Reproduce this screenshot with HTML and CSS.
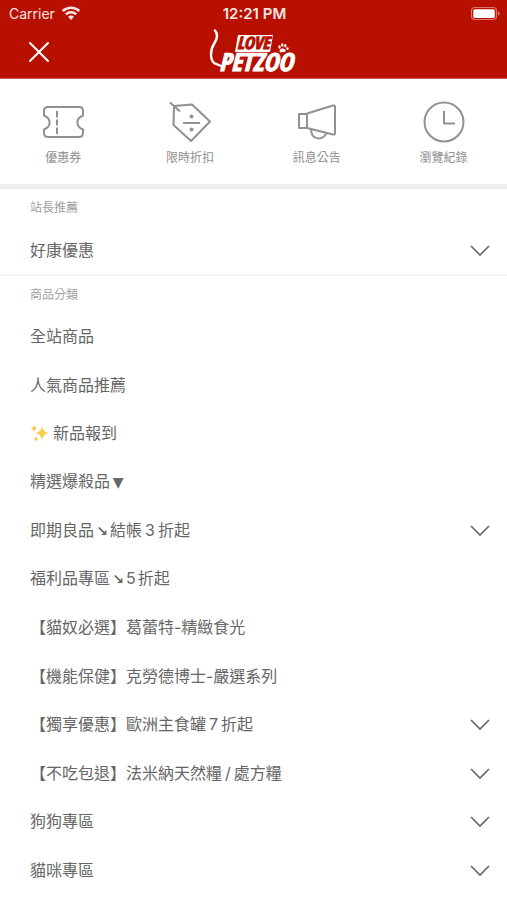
FILE: index.html
```html
<!DOCTYPE html>
<html lang="zh-Hant">
<head>
<meta charset="utf-8">
<meta name="viewport" content="width=device-width, initial-scale=1">
<title>LOVE PETZOO</title>
<link rel="stylesheet" href="styles.css">
</head>
<body>
<svg class="defs" aria-hidden="true">
  <symbol id="chevron" viewBox="0 0 22 14"><path d="M2 3l9 9 9-9" fill="none" stroke="currentColor" stroke-width="1.6"/></symbol>
</svg>
<header class="top">
  <div class="status">
    <div class="carrier"><span>Carrier</span>
      <svg width="20" height="16" viewBox="0 0 20 16" fill="none" stroke="currentColor" stroke-width="2.5"><path d="M1.7 5a12 12 0 0 1 16.600 0M4.800 8.300a7.500 7.500 0 0 1 10.400 0"/><path d="M10 14l-3-3.200a4.400 4.400 0 0 1 6 0z" fill="currentColor" stroke="none"/></svg>
    </div>
    <time>12:21 PM</time>
    <svg class="battery" width="30" height="16" viewBox="0 0 30 16"><rect x="1.500" y="1.500" width="25" height="12" rx="3.500" fill="none" stroke="#dd7770" stroke-width="1.200"/><rect x="3.300" y="3.200" width="21.500" height="8.800" rx="1.500" fill="#fff"/><path d="M28 5.300c2.200 1 2.200 3.400 0 4.400z" fill="#dd7770"/></svg>
  </div>
  <div class="brandbar">
    <button class="close" type="button" aria-label="關閉"><svg width="20" height="20" viewBox="0 0 20 20"><path d="M1 1l18 18M19 1L1 19" stroke="currentColor" stroke-width="2" stroke-linecap="round"/></svg></button>
    <a class="logo" href="#" aria-label="LOVE PETZOO">
      <svg width="92" height="46" viewBox="0 0 92 46">
        <path d="M7 1.500C10 5 10 9 6 15C2 21 2 30 6 34L13 37" fill="none" stroke="#fff" stroke-width="2.400" stroke-linecap="round"/>
        <path d="M30 6h35l-3 17H27z" fill="#fff"/>
        <text class="logo-love" x="29" y="20">LOVE</text>
        <text class="logo-pet" x="11" y="42">PETZOO</text>
        <g fill="#fff"><path d="M71.500 22.500c0-2.500 2-3.500 3.500-3s3.500 1.500 2.500 2.700-2 .8-2.800.8-2 1.500-3.200-.5z"/><ellipse cx="71.500" cy="18" rx="1.200" ry="1.700"/><ellipse cx="74.300" cy="16" rx="1.200" ry="1.700"/><ellipse cx="77.300" cy="16.700" rx="1.200" ry="1.700"/><ellipse cx="79.500" cy="19.500" rx="1.100" ry="1.500"/></g>
      </svg>
    </a>
  </div>
</header>
<nav class="shortcuts">
  <a href="#"><svg width="44" height="44" viewBox="0 0 44 44"><path d="M7 7h31q4 0 4 4v4.500c-7.500 3-7.500 11 0 14V33q0 4-4 4H7q-4 0-4-4v-3.500c7.500-3 7.500-11 0-14V11q0-4 4-4z"/><path d="M16 11v6.500m0 2v6m0 2v6.500"/></svg><span>優惠券</span></a>
  <a href="#"><svg width="44" height="44" viewBox="0 0 44 44"><path d="M6 6l18-1.500L42 21.500 23 41 5.500 25z"/><path d="M2 2.500l10 9M15 23h17"/><path d="M23.500 16.500v.01M23.500 29.500v.01" stroke-width="4" stroke-linecap="round"/></svg><span>限時折扣</span></a>
  <a href="#"><svg width="44" height="44" viewBox="0 0 44 44"><path d="M4 14h8v14H4zM12 13.500L38 5.500q2-.5 2 1.500v26q0 2-2 1.500L12 28M16 29c0 12 13 11.500 15 4.500"/></svg><span>訊息公告</span></a>
  <a href="#"><svg width="44" height="44" viewBox="0 0 44 44"><circle cx="22" cy="22" r="19.500"/><path d="M22 11v12.500h11"/></svg><span>瀏覽紀錄</span></a>
</nav>
<section class="featured">
  <h2>站長推薦</h2>
  <button class="row" type="button"><span>好康優惠</span><svg class="chevron"><use href="#chevron"/></svg></button>
</section>
<section class="categories">
  <h2>商品分類</h2>
  <nav class="list">
    <a class="row" href="#">全站商品</a>
    <a class="row" href="#">人氣商品推薦</a>
    <a class="row" href="#"><svg class="sparkle" width="20" height="18" viewBox="0 0 20 18" role="img" aria-label="✨"><path fill="#f8ce52" d="M12 2q1 6 7 7-6 1-7 7-1-6-7-7 6-1 7-7zM4 1q.5 3 3 3.500Q4.500 5 4 8 3.500 5 1 4.500 3.500 4 4 1zM6 12q.5 2.500 2.500 3Q6.500 15.500 6 18 5.500 15.500 3.500 15 5.500 14.500 6 12z"/></svg><span>新品報到</span></a>
    <a class="row" href="#"><span>精選爆殺品<span class="mark">▼</span></span></a>
    <button class="row" type="button"><span>即期良品<span class="mark arrow">↘</span>結帳<span class="num">3</span>折起</span><svg class="chevron"><use href="#chevron"/></svg></button>
    <a class="row" href="#"><span>福利品專區<span class="mark arrow">↘</span>5<span class="after-num">折起</span></span></a>
    <a class="row" href="#">【貓奴必選】葛蕾特-精緻食光</a>
    <a class="row" href="#">【機能保健】克勞德博士-嚴選系列</a>
    <button class="row" type="button"><span>【獨享優惠】歐洲主食罐<span class="num">7</span>折起</span><svg class="chevron"><use href="#chevron"/></svg></button>
    <button class="row" type="button"><span>【不吃包退】法米納天然糧<span class="num">/</span>處方糧</span><svg class="chevron"><use href="#chevron"/></svg></button>
    <button class="row" type="button"><span>狗狗專區</span><svg class="chevron"><use href="#chevron"/></svg></button>
    <button class="row" type="button"><span>貓咪專區</span><svg class="chevron"><use href="#chevron"/></svg></button>
  </nav>
</section>
</body>
</html>
```
FILE: styles.css
```css
* { box-sizing: border-box; }
body {
  margin: 0;
  min-height: 100vh;
  display: flex;
  flex-direction: column;
  background: #fff;
  color: #666;
  font: 16px/24px Inter, "Noto Sans CJK TC", sans-serif;
}
a { color: inherit; text-decoration: none; }
button { border: 0; padding: 0; background: none; color: inherit; font: inherit; text-align: left; }
.defs { position: absolute; width: 0; height: 0; }
.top { background: #b71000; color: #fff; border-bottom: 1px solid #cf5a50; }
.status, .brandbar { display: grid; grid-template-columns: 1fr auto 1fr; align-items: center; }
.status { height: 27px; padding: 0 7px 0 9px; font-size: 15px; color: #f8e4e2; }
.status time { font-weight: 600; }
.carrier { display: flex; align-items: center; gap: 6px; font-size: 14px; }
.battery { justify-self: end; }
.brandbar { height: 51px; padding: 0 29px 2px; }
.close, .logo { display: flex; }
.close { justify-self: start; }
.logo-love, .logo-pet { font-family: "Open Sans Condensed", "Roboto Condensed", Roboto, sans-serif; font-weight: 900; font-style: italic; }
.logo-love { fill: #b71000; stroke: #b71000; font-size: 17px; }
.logo-pet { fill: #fff; stroke: #fff; font-size: 25px; }
.shortcuts { display: grid; grid-template-columns: repeat(4, 1fr); height: 110px; padding-top: 21px; border-bottom: 5px solid #eee; color: #8e8e8e; font-size: 12px; line-height: 20px; }
.shortcuts a { display: flex; flex-direction: column; align-items: center; gap: 4px; }
.shortcuts svg { fill: none; stroke: #919191; stroke-width: 2; stroke-linejoin: round; }
h2 { margin: 0; padding: 9px 30px 7px; font-size: 12px; font-weight: 400; line-height: 20px; color: #a0a0a0; }
.featured { border-bottom: 2px solid #f5f5f5; }
.featured .row { min-height: 49px; }
.categories { flex: 1; display: flex; flex-direction: column; }
.list { flex: 1; display: grid; grid-auto-rows: minmax(48px, 1fr); padding-bottom: 6px; }
.row { display: flex; align-items: center; width: 100%; padding: 0 16px 0 30px; }
.chevron { width: 22px; height: 14px; margin-left: auto; }
.sparkle { margin-right: 3px; }
.mark { display: inline-block; width: 16px; text-align: center; font-family: "DejaVu Sans", sans-serif; font-size: 14px; }
.arrow { font-weight: 700; }
.num { margin: 0 3px; }
.after-num { margin-left: 2px; }
```
